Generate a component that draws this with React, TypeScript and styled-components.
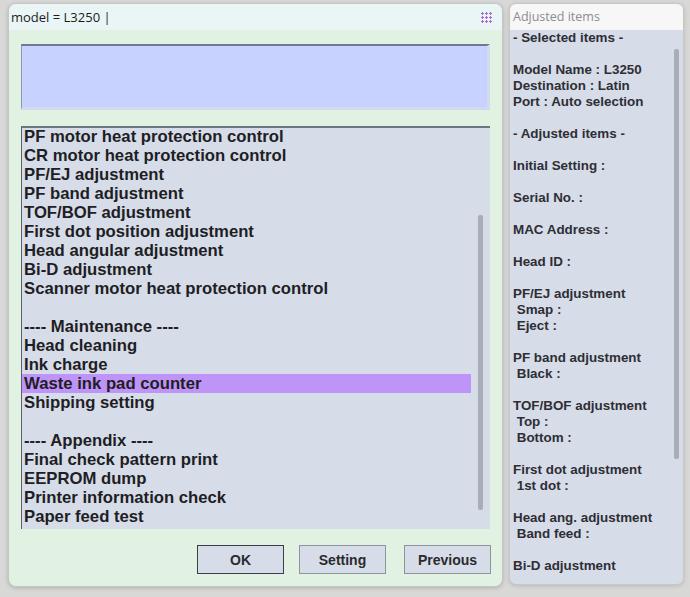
import React from "react";
import styled, { createGlobalStyle } from "styled-components";

const GlobalStyle = createGlobalStyle`
  html, body {
    margin: 0;
    padding: 0;
    background: #d8d8d6;
  }
  body {
    font-family: "Liberation Sans", Arial, sans-serif;
  }
`;

const Desktop = styled.div`
  display: flex;
  align-items: flex-start;
  gap: 6px;
  padding: 3px 0 0 8px;
  width: 690px;
  height: 597px;
  box-sizing: border-box;
  overflow: hidden;
`;

const MainWindow = styled.div`
  width: 495px;
  height: 584px;
  box-sizing: border-box;
  display: flex;
  flex-direction: column;
  border: 1px solid #c4c8c4;
  border-radius: 8px;
  overflow: hidden;
  background: #e2f2e2;
  box-shadow: 0 1px 4px rgba(0, 0, 0, 0.18);
`;

const TitleBar = styled.div`
  height: 26px;
  flex: none;
  display: flex;
  align-items: center;
  justify-content: space-between;
  padding: 0 10px 1px 2px;
  box-sizing: border-box;
  background: #eaf5f6;
  font-family: "Open Sans", "Noto Sans", sans-serif;
  font-size: 13px;
  color: #1c1c1c;
`;

const Grip = styled.svg`
  width: 11px;
  height: 11px;
  margin-top: 2px;
`;

const Body = styled.div`
  flex: 1;
  display: flex;
  flex-direction: column;
  padding: 14px 12px 13px 12px;
`;

const InfoBox = styled.div`
  height: 66px;
  flex: none;
  background: #c8d2fe;
  border-top: 2px solid #6e7a90;
  border-left: 1px solid #8c96aa;
  border-right: 3px solid #d3daf0;
  border-bottom: 3px solid #d3daf0;
  box-sizing: border-box;
`;

const MenuList = styled.div`
  margin-top: 16px;
  height: 403px;
  flex: none;
  display: flex;
  background: #d6dce8;
  border-top: 2px solid #6e7480;
  border-left: 1px solid #5a6070;
  box-sizing: border-box;
`;

const MenuItems = styled.div`
  flex: 1;
  margin-top: -1px;
  display: flex;
  flex-direction: column;
`;

const MenuItem = styled.div<{ $selected?: boolean }>`
  height: 19px;
  line-height: 19px;
  padding-left: 2px;
  font-weight: bold;
  font-size: 16.7px;
  color: #1e1e24;
  white-space: nowrap;
  background: ${(p) => (p.$selected ? "#bf94f8" : "transparent")};
`;

const ScrollTrack = styled.div<{ $width: number }>`
  width: ${(p) => p.$width}px;
  flex: none;
  display: flex;
  justify-content: center;
`;

const ScrollThumb = styled.div<{ $top: number; $height: number }>`
  width: 5px;
  margin-top: ${(p) => p.$top}px;
  height: ${(p) => p.$height}px;
  background: #a8adb8;
  border-radius: 2px;
`;

const ButtonRow = styled.div`
  margin-top: 16px;
  display: flex;
  justify-content: flex-end;
  margin-right: -1px;
`;

const Button = styled.button<{ $default?: boolean; $gap?: number }>`
  width: 87px;
  height: 29px;
  margin-left: ${(p) => p.$gap ?? 0}px;
  background: #d6dce8;
  border: 1px solid ${(p) => (p.$default ? "#3a3e48" : "#8e949e")};
  box-shadow: ${(p) => (p.$default ? "inset 0 0 0 1px #d6dce8" : "none")};
  font-family: "Liberation Sans", Arial, sans-serif;
  font-weight: bold;
  font-size: 14px;
  color: #2a2a30;
  padding: 0;
`;

const SidePanel = styled.div`
  width: 175px;
  height: 582px;
  box-sizing: border-box;
  display: flex;
  flex-direction: column;
  border: 1px solid #c8c8c8;
  border-radius: 7px;
  overflow: hidden;
  background: #d6dce8;
  box-shadow: 0 1px 4px rgba(0, 0, 0, 0.15);
`;

const SideTitle = styled.div`
  height: 26px;
  flex: none;
  display: flex;
  align-items: center;
  padding: 0 0 1px 3px;
  box-sizing: border-box;
  background: #f7f7f7;
  font-family: "Open Sans", "Noto Sans", sans-serif;
  font-size: 12.5px;
  color: #8c8c8c;
`;

const SideBody = styled.div`
  flex: 1;
  display: flex;
`;

const SideText = styled.div`
  flex: 1;
  padding: 0 0 0 3px;
`;

const SideLine = styled.div`
  height: 16px;
  line-height: 16px;
  font-weight: bold;
  font-size: 13.4px;
  color: #2e2e34;
  white-space: pre;
`;

const menu: string[] = [
  "PF motor heat protection control",
  "CR motor heat protection control",
  "PF/EJ adjustment",
  "PF band adjustment",
  "TOF/BOF adjustment",
  "First dot position adjustment",
  "Head angular adjustment",
  "Bi-D adjustment",
  "Scanner motor heat protection control",
  "",
  "---- Maintenance ----",
  "Head cleaning",
  "Ink charge",
  "Waste ink pad counter",
  "Shipping setting",
  "",
  "---- Appendix ----",
  "Final check pattern print",
  "EEPROM dump",
  "Printer information check",
  "Paper feed test",
];

const side: string[] = [
  "- Selected items -",
  "",
  "Model Name : L3250",
  "Destination : Latin",
  "Port : Auto selection",
  "",
  "- Adjusted items -",
  "",
  "Initial Setting :",
  "",
  "Serial No. :",
  "",
  "MAC Address :",
  "",
  "Head ID :",
  "",
  "PF/EJ adjustment",
  " Smap :",
  " Eject :",
  "",
  "PF band adjustment",
  " Black :",
  "",
  "TOF/BOF adjustment",
  " Top :",
  " Bottom :",
  "",
  "First dot adjustment",
  " 1st dot :",
  "",
  "Head ang. adjustment",
  " Band feed :",
  "",
  "Bi-D adjustment",
];

function GripIcon() {
  const dots = [];
  for (let r = 0; r < 3; r++) {
    for (let c = 0; c < 3; c++) {
      const x = 1.5 + c * 4;
      const y = 1.5 + r * 4;
      dots.push(
        <path
          key={`${r}-${c}`}
          d={`M${x - 1.5} ${y}H${x + 1.5}M${x} ${y - 1.5}V${y + 1.5}`}
          stroke="#a96bd0"
          strokeWidth="1.1"
        />
      );
    }
  }
  return <Grip viewBox="0 0 11 11">{dots}</Grip>;
}

export default function App() {
  return (
    <>
      <GlobalStyle />
      <Desktop>
        <MainWindow>
          <TitleBar>
            <span>model = L3250 |</span>
            <GripIcon />
          </TitleBar>
          <Body>
            <InfoBox />
            <MenuList>
              <MenuItems>
                {menu.map((item, i) => (
                  <MenuItem key={i} $selected={item === "Waste ink pad counter"}>
                    {item || "\u00a0"}
                  </MenuItem>
                ))}
              </MenuItems>
              <ScrollTrack $width={19}>
                <ScrollThumb $top={87} $height={295} />
              </ScrollTrack>
            </MenuList>
            <ButtonRow>
              <Button $default>OK</Button>
              <Button $gap={15}>Setting</Button>
              <Button $gap={18}>Previous</Button>
            </ButtonRow>
          </Body>
        </MainWindow>
        <SidePanel>
          <SideTitle>Adjusted items</SideTitle>
          <SideBody>
            <SideText>
              {side.map((line, i) => (
                <SideLine key={i}>{line || "\u00a0"}</SideLine>
              ))}
            </SideText>
            <ScrollTrack $width={14}>
              <ScrollThumb $top={19} $height={410} />
            </ScrollTrack>
          </SideBody>
        </SidePanel>
      </Desktop>
    </>
  );
}
